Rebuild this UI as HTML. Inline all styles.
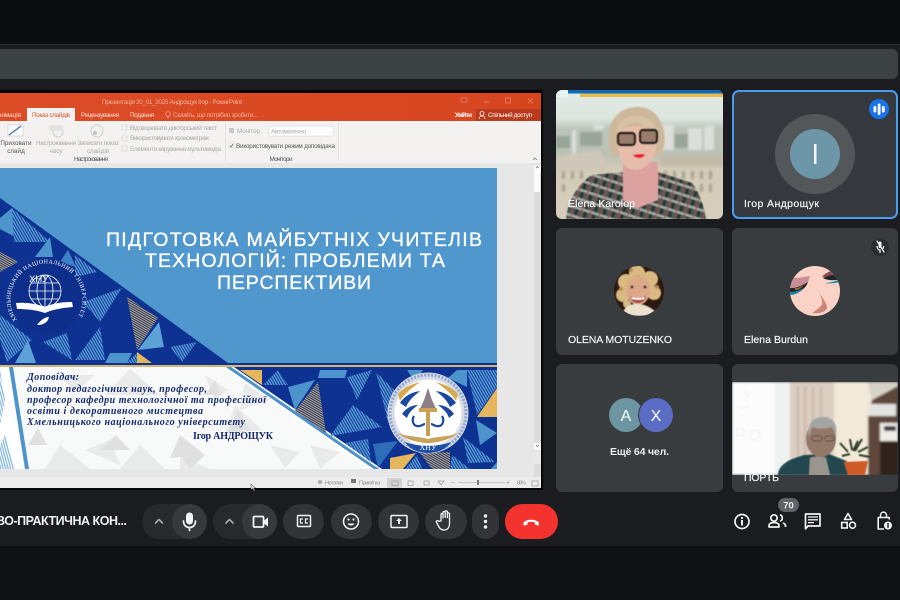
<!DOCTYPE html>
<html lang="uk"><head><meta charset="utf-8"><title>Meet</title>
<style>
html,body{margin:0;padding:0;background:#1a1c1f;width:900px;height:600px;overflow:hidden}
svg{display:block}
text{font-family:"Liberation Sans","DejaVu Sans",sans-serif}
.rb{font-size:6.3px;fill:#a9a9a9}
.rd{font-size:6.3px;fill:#555}
.n{font-size:10.5px;fill:#f1f3f4;font-weight:400;stroke:#f1f3f4;stroke-width:.2}
.ic{fill:none;stroke:#f1f3f4;stroke-width:1.7;stroke-linecap:round;stroke-linejoin:round}
.f{fill:#f1f3f4}
.dk{font-family:"Liberation Serif","DejaVu Serif",serif;font-weight:700;font-style:italic;font-size:10px;fill:#142a70}
</style></head><body>
<svg width="900" height="600" viewBox="0 0 900 600" xmlns="http://www.w3.org/2000/svg">
<defs>
<filter id="b3" x="-5%" y="-5%" width="110%" height="110%"><feGaussianBlur stdDeviation=".3"/></filter>
<filter id="b5" x="-5%" y="-5%" width="110%" height="110%"><feGaussianBlur stdDeviation=".5"/></filter>
<filter id="b1" x="-10%" y="-10%" width="120%" height="120%"><feGaussianBlur stdDeviation="1"/></filter>
<pattern id="hL" width="2.4" height="2.4" patternUnits="userSpaceOnUse" patternTransform="rotate(60)"><rect width="2.4" height="2.4" fill="#133f9c"/><rect width="2.4" height="1.3" fill="#5b9fd6"/></pattern>
<pattern id="hT" width="2" height="2" patternUnits="userSpaceOnUse" patternTransform="rotate(30)"><rect width="2" height="2" fill="#24387f"/><rect width="2" height="1" fill="#bda876"/></pattern>
<pattern id="hW" width="2.4" height="2.4" patternUnits="userSpaceOnUse" patternTransform="rotate(75)"><rect width="2.4" height="2.4" fill="#fff"/><rect width="2.4" height="1.2" fill="#7db3da"/></pattern>
<pattern id="pl" width="9" height="9" patternUnits="userSpaceOnUse" patternTransform="rotate(18)"><rect width="9" height="9" fill="#4d5a55"/><rect width="3" height="9" fill="#29332f"/><rect width="9" height="2.5" fill="#a2aaa3"/><rect x="6" width="1" height="9" fill="#9c4a4c"/></pattern>
<linearGradient id="ttl" x1="0" x2="1" y1="0" y2="0"><stop offset="0" stop-color="#dc4d27"/><stop offset="1" stop-color="#d6451f"/></linearGradient>
<linearGradient id="sky" x1="0" x2="0" y1="0" y2="1"><stop offset="0" stop-color="#e2ebe5"/><stop offset=".22" stop-color="#dde5df"/><stop offset=".3" stop-color="#bcc5bb"/><stop offset=".5" stop-color="#bcc1b6"/><stop offset=".62" stop-color="#d3ccb9"/><stop offset="1" stop-color="#d6cebb"/></linearGradient>
<clipPath id="t1"><rect x="556" y="90" width="167" height="129" rx="6"/></clipPath>
<clipPath id="t6"><rect x="732" y="382" width="166" height="93"/></clipPath>
<clipPath id="a3"><circle cx="639" cy="291" r="25"/></clipPath>
<clipPath id="a4"><circle cx="815" cy="291" r="25"/></clipPath>
<clipPath id="slide"><rect x="0" y="168" width="497" height="301"/></clipPath>
<path id="arc" d="M17 320A36 36 0 1 1 76 320"/>
</defs>

<!-- page background -->
<rect width="900" height="600" fill="#1a1c1f"/>
<rect width="900" height="44" fill="#0b0c10"/>
<rect y="44" width="900" height="1" fill="#2a2c2f"/>
<rect y="546" width="900" height="54" fill="#101114"/>
<rect x="-8" y="49" width="906" height="30" rx="6" fill="#3c4144"/>

<!-- shared screen -->
<rect x="-2" y="90" width="545" height="400" fill="#050505"/>
<g filter="url(#b3)">
<rect x="0" y="93" width="541" height="28" fill="url(#ttl)"/>
<rect x="0" y="121" width="541" height="43" fill="#f3f2f1"/>
<rect x="0" y="163" width="541" height="315" fill="#e7e7e7"/>
<rect x="0" y="477" width="541" height="11" fill="#ececec"/>
<rect x="534" y="164" width="7" height="313" fill="#dcdcdc"/>
<rect x="534" y="165" width="7" height="7" fill="#fafafa"/>
<rect x="534" y="172" width="6" height="20" fill="#fbfbfb"/>
<rect x="534" y="443" width="7" height="7" fill="#fafafa"/>
<rect x="534" y="450" width="7" height="7" fill="#e8e8e8"/><rect x="534" y="457" width="7" height="7" fill="#e8e8e8"/>
<path d="M536 168l1.400-1.600 1.400 1.600M536 445l1.400 1.600 1.400-1.600" fill="none" stroke="#666" stroke-width=".7"/>
<text x="172" y="104" text-anchor="middle" font-size="6.300" fill="#f1b19d" textLength="140">Презентація 20_01_2025 Андрощук Ігор - PowerPoint</text>
<path d="M461 98h6v4h-6zM484 102h5M505.500 98h5v5h-5zM528 98.500l5 5m0-5l-5 5" fill="none" stroke="#e98a6f" stroke-width=".7"/>
<rect x="27" y="108" width="48" height="13" fill="#f3f2f1"/>
<text x="0" y="117" font-size="6.300" fill="#fbe3da" textLength="21">німація</text>
<text x="32" y="117" font-size="6.300" fill="#d9532f" textLength="38">Показ слайдів</text>
<text x="81" y="117" font-size="6.300" fill="#fbe3da" textLength="38">Рецензування</text>
<text x="130" y="117" font-size="6.300" fill="#fbe3da" textLength="24">Подання</text>
<circle cx="168" cy="114" r="2.300" fill="none" stroke="#f4b8a5" stroke-width=".7"/><path d="M167 117.500h2" stroke="#f4b8a5" stroke-width=".8"/>
<text x="173" y="117" font-size="6.300" fill="#f2b49e" textLength="85">Скажіть, що потрібно зробити...</text>
<text x="455" y="117" font-size="6.300" fill="#fff" font-weight="700" textLength="17">Увійти</text>
<rect x="476" y="109" width="65" height="12" fill="#b93b1b"/>
<circle cx="482" cy="113.500" r="2" fill="none" stroke="#fff" stroke-width=".8"/><path d="M479 119c0-4 6-4 6 0" fill="none" stroke="#fff" stroke-width=".8"/>
<text x="488" y="117" font-size="6.300" fill="#fff" textLength="44">Спільний доступ</text>

<rect x="8" y="125" width="15" height="11" fill="#fff" stroke="#bbb" stroke-width=".5"/><path d="M9 135l12-9" stroke="#3c6fb0" stroke-width="1.200"/>
<circle cx="58" cy="132" r="5" fill="none" stroke="#cfcfcf"/><rect x="49" y="125" width="14" height="6" fill="#e4e4e4"/>
<circle cx="97" cy="131" r="6" fill="none" stroke="#cfcfcf"/><circle cx="95" cy="133" r="2" fill="#c4c4c4"/>
<text x="16" y="145" text-anchor="middle" class="rd">Приховати</text><text x="16" y="153" text-anchor="middle" class="rd">слайд</text>
<text x="56" y="145" text-anchor="middle" class="rb" textLength="40">Настроювання</text><text x="56" y="153" text-anchor="middle" class="rb">часу</text>
<text x="98" y="145" text-anchor="middle" class="rb" textLength="41">Записати показ</text><text x="98" y="153" text-anchor="middle" class="rb">слайдів</text>
<text x="91" y="161" text-anchor="middle" class="rd" textLength="34">Настроювання</text>
<g fill="none" stroke="#d5d5d5" stroke-width=".7"><rect x="122" y="125" width="5" height="5"/><rect x="122" y="136" width="5" height="5"/><rect x="122" y="146" width="5" height="5"/></g>
<text x="130" y="130" class="rb" textLength="87">Відтворювати дикторський текст</text>
<text x="130" y="140" class="rb" textLength="79">Використовувати хронометраж</text>
<text x="130" y="151" class="rb" textLength="91">Елементи керування мультимедіа</text>
<rect x="225" y="123" width=".8" height="38" fill="#dedede"/>
<rect x="229" y="128" width="5" height="5" fill="#c8c8c8"/>
<text x="237" y="133" class="rb" textLength="23">Монітор</text>
<rect x="269" y="126" width="64" height="10" fill="#fdfdfd" stroke="#d4d4d4" stroke-width=".5"/>
<text x="271" y="133.500" class="rb" textLength="35">Автоматично</text>
<rect x="229" y="143" width="5" height="5" fill="#fff" stroke="#bbb" stroke-width=".4"/><path d="M230 145.500l1 1.500 2-3" fill="none" stroke="#555" stroke-width=".7"/>
<text x="236" y="148" class="rd" textLength="99">Використовувати режим доповідача</text>
<text x="281" y="161" text-anchor="middle" class="rd" textLength="23">Монітори</text>
<rect x="338" y="123" width=".8" height="38" fill="#dedede"/>
<path d="M533 160l2-2 2 2" fill="none" stroke="#666" stroke-width=".7"/>

<!-- status -->
<rect x="387" y="478" width="15" height="10" fill="#d2d2d2"/>
<g fill="none" stroke="#999" stroke-width=".7"><rect x="392" y="481" width="6" height="4.500"/><rect x="408" y="481" width="5" height="4.500"/><rect x="424" y="481" width="5" height="4"/><path d="M438 481h6l-3 4z"/><rect x="532" y="481" width="6" height="5"/></g>
<circle cx="320" cy="482" r="2" fill="#aaa"/>
<rect x="351" y="479" width="5" height="4" fill="#777"/>
<text x="325" y="484.500" font-size="5.500" fill="#8b8b8b" textLength="18">Нотатки</text>
<text x="359" y="484.500" font-size="5.500" fill="#8b8b8b" textLength="21">Примітка</text>
<path d="M451 482.500h4M458 482.500h47M506 482.500h4M508 480.500v4" stroke="#999" stroke-width=".6"/>
<rect x="477" y="480" width="2" height="5" fill="#777"/>
<text x="517" y="484.500" font-size="5.500" fill="#8b8b8b" textLength="9">86%</text>
</g>

<!-- slide -->
<g clip-path="url(#slide)"><g filter="url(#b3)">
<rect x="0" y="168" width="497" height="197" fill="#4f97cc"/>
<polygon points="0,198 228,363 0,363" fill="#0a3391"/>
<!-- upper-left triangles -->
<polygon points="0,218 12,208 17,238 0,229" fill="#4d93cc"/>
<polygon points="12,208 50,242 14,242" fill="url(#hL)"/>
<polygon points="50,237 53,257 35,257" fill="#4d93cc"/>
<polygon points="0,252 18,262 0,272" fill="url(#hT)"/>
<polygon points="68,250 76,267 60,262" fill="#3d80c4"/>
<polygon points="75,255 97,272 75,277" fill="url(#hL)"/>
<polygon points="83,302 122,288 100,322" fill="url(#hL)"/>
<polygon points="127,297 158,318 137,350" fill="url(#hT)"/>
<polygon points="159,322 164,347 138,350" fill="#5da2d6"/>
<polygon points="170,347 197,342 182,362" fill="url(#hL)"/>
<polygon points="137,352 152,363 137,363" fill="#e6b65c"/>
<polygon points="137,353 137,363 126,363" fill="url(#hL)"/>
<polygon points="110,353 132,353 127,363 105,363" fill="#4d93cc"/>
<polygon points="100,327 105,360 75,360" fill="url(#hL)"/>
<polygon points="67,333 72,360 43,342" fill="url(#hL)"/>
<polygon points="0,315 32,340 7,362 0,340" fill="url(#hL)"/>
<polygon points="28,340 36,363 15,363" fill="#5da2d6"/>
<!-- left emblem -->
<circle cx="46" cy="296" r="38" fill="#0a2f8a"/>
<text font-size="5.800" fill="#fff" style="font-family:'Liberation Serif',serif" textLength="152"><textPath href="#arc" startOffset="0">ХМЕЛЬНИЦЬКИЙ НАЦІОНАЛЬНИЙ УНІВЕРСИТЕТ</textPath></text>
<g fill="none" stroke="#fff" stroke-width=".8"><circle cx="45" cy="291" r="16"/><ellipse cx="45" cy="291" rx="8" ry="16"/><path d="M45 275v32M29 291h32M31 283h28M31 299h28"/></g>
<text x="29" y="282" font-size="9.500" fill="#fff">ХНУ</text>
<path d="M16 303c12-1 20 1 29 4 9-4 17-5 27-5l1 5c-10 1-19 2-28 6-9-3-18-4-28-4z" fill="#fff"/>
<path d="M37 325c3-4 7-8 12-8-1 5-5 8-12 8z" fill="#fff"/>
<!-- bars -->
<rect x="0" y="363" width="497" height="2" fill="#0a3391"/>
<rect x="0" y="365" width="497" height="2.200" fill="#d9b673"/>
<!-- lower band -->
<rect x="0" y="367" width="497" height="102" fill="#0a3391"/>
<polygon points="0,367 225,367 372,469 0,469" fill="#f8f9f9"/>
<g fill="#e9eaea">
<polygon points="130,369 160,395 105,395"/><polygon points="205,375 228,390 215,400"/><polygon points="235,405 262,430 225,434"/><polygon points="60,375 95,375 75,392"/><polygon points="245,380 270,400 240,410"/><polygon points="85,450 110,440 120,465"/>
<polygon points="60,445 90,469 45,469"/><polygon points="140,445 165,469 120,469"/><polygon points="180,456 210,469 180,469"/><polygon points="270,445 300,452 285,468"/><polygon points="310,445 340,452 320,469"/>
</g>
<g fill="#dfe0df">
<polygon points="180,435 205,455 170,458"/><polygon points="38,428 47,445 28,445"/><polygon points="116,435 130,450 100,450"/><polygon points="238,410 250,430 228,432"/><polygon points="215,380 222,395 205,395"/><polygon points="180,455 205,455 190,469"/>
</g>
<polygon points="0,367 9,367 25,469 0,469" fill="#fff"/>
<polygon points="0,370 5,400 0,425" fill="url(#hW)"/>
<polygon points="5,435 15,469 0,469 0,445" fill="url(#hW)"/>
<polygon points="9,367 13,367 29,469 25,469" fill="#4d94c9"/>
<polygon points="222,367 226,367 374,469 369,469" fill="#fff"/>
<polygon points="226,367 231,367 379,469 374,469" fill="#4d94c9"/>
<polygon points="231,367 234,367 382,469 379,469" fill="#fff"/>
<!-- right triangles -->
<polygon points="240,370 262,370 262,385" fill="#e6b65c"/>
<polygon points="263,385 278,370 288,385" fill="url(#hL)"/>
<polygon points="288,387 315,380 295,410" fill="#4d93cc"/>
<polygon points="318,382 326,433 295,411" fill="url(#hT)"/>
<polygon points="320,370 347,370 345,378 318,378" fill="#4d93cc"/>
<polygon points="347,377 372,370 357,400" fill="url(#hL)"/>
<polygon points="353,405 382,427 330,436" fill="url(#hL)"/>
<polygon points="376,372 397,393 388,423" fill="url(#hL)"/>
<polygon points="407,370 423,370 415,382" fill="#4d93cc"/>
<polygon points="448,378 457,370 467,370 467,387" fill="#4d93cc"/>
<polygon points="467,370 497,370 497,387 477,415" fill="url(#hL)"/>
<polygon points="497,388 497,417 477,417" fill="#e6b65c"/>
<polygon points="476,420 497,433 480,445" fill="#4d93cc"/>
<polygon points="463,437 495,462 468,463" fill="url(#hL)"/>
<polygon points="345,443 368,439 371,462" fill="url(#hL)"/>
<polygon points="373,444 398,441 378,468" fill="#2f6db8"/>
<polygon points="390,458 416,453 403,469 390,469" fill="#e6b65c"/>
<polygon points="420,453 450,452 450,469 432,469" fill="url(#hT)"/>
<polygon points="417,455 422,469 405,469" fill="url(#hL)"/>
<polygon points="452,455 470,469 450,469" fill="url(#hL)"/>
<polygon points="497,462 497,469 491,469" fill="#4d93cc"/>
<!-- seal -->
<circle cx="428" cy="413" r="40.500" fill="#d6dbe6"/>
<circle cx="428" cy="413" r="38" fill="none" stroke="#8ea4cc" stroke-width="3" stroke-dasharray="2 1.500"/>
<circle cx="428" cy="413" r="33.500" fill="#fff"/>
<path d="M398 394c5-6 14-10 22-12-8 6-15 11-20 19zM458 394c-5-6-14-10-22-12 8 6 15 11 20 19z" fill="#d9a94e"/>
<path d="M400 403c5-8 13-11 20-12-6 5-11 9-14 16zM456 403c-5-8-13-11-20-12 6 5 11 9 14 16zM402 414c4-6 10-9 16-9-5 4-9 7-11 13zM454 414c-4-6-10-9-16-9 5 4 9 7 11 13z" fill="#1d4aa0"/>
<path d="M428 388l4 12 5 11h-18l5-11z" fill="#8b7f87"/>
<rect x="419" y="408" width="18" height="4" fill="#cda253"/>
<rect x="426" y="412" width="4" height="24" fill="#c69e55"/>
<path d="M414 416c-3 5 0 10 3 10 4 1 6-2 8-2M442 416c3 5 0 10-3 10-4 1-6-2-8-2" fill="none" stroke="#1d4aa0" stroke-width="2.200"/>
<path d="M398 433c9 4 20 3 30 6 10-3 21-2 30-6-6 6-20 10-30 10s-24-4-30-10z" fill="#c9a25b"/>
<path d="M405 442c12 5 34 5 46 0-5 8-15 11-23 11s-18-3-23-11z" fill="#1a4ea8"/>
<text x="428" y="450" text-anchor="middle" font-size="8" fill="#fff" style="font-family:'Liberation Serif',serif">ХНУ</text>
<!-- text -->
<text x="27" y="380" class="dk" textLength="52">Доповідач:</text>
<text x="27" y="392" class="dk" textLength="180">доктор педагогічних наук, професор,</text>
<text x="27" y="403" class="dk" textLength="239">професор кафедри технологічної та професійної</text>
<text x="27" y="414" class="dk" textLength="176">освіти і декоративного мистецтва</text>
<text x="27" y="425" class="dk" textLength="218">Хмельницького національного університету</text>
<text x="193" y="439" font-size="10" font-weight="700" fill="#142a70" style="font-family:'Liberation Serif',serif" textLength="80">Ігор АНДРОЩУК</text>
<!-- heading -->
<g font-size="19.500" fill="#fff" stroke="#fff" stroke-width=".35">
<text x="106" y="246" textLength="376">ПІДГОТОВКА МАЙБУТНІХ УЧИТЕЛІВ</text>
<text x="145" y="267" textLength="300">ТЕХНОЛОГІЙ: ПРОБЛЕМИ ТА</text>
<text x="217" y="289" textLength="154">ПЕРСПЕКТИВИ</text>
</g>
</g></g>
<path d="M251 484v6l1.500-1.500 1.500 2.500 1-.6-1.400-2.400 2 0z" fill="#ddd" stroke="#222" stroke-width=".4"/>

<!-- tile 1 -->
<g clip-path="url(#t1)">
<rect x="556" y="90" width="167" height="129" fill="url(#sky)"/>
<g filter="url(#b1)">
<g fill="#dcdeda"><rect x="660" y="124" width="14" height="26"/><rect x="688" y="128" width="14" height="22"/><rect x="704" y="126" width="10" height="24"/><rect x="594" y="124" width="10" height="6"/><rect x="572" y="130" width="4" height="26"/></g>
<g fill="#9aa59a"><rect x="580" y="132" width="22" height="14"/><rect x="674" y="134" width="14" height="14"/><rect x="556" y="136" width="14" height="12"/></g>
<polygon points="556,156 600,150 612,172 556,172" fill="#cfc7b7"/>
<rect x="660" y="156" width="63" height="10" fill="#c4baa8"/>
<g fill="#a9a191"><rect x="562" y="171" width="3" height="8"/><rect x="571" y="171" width="3" height="8"/><rect x="580" y="171" width="3" height="8"/><rect x="664" y="171" width="3" height="8"/><rect x="673" y="171" width="3" height="8"/><rect x="682" y="171" width="3" height="8"/><rect x="691" y="171" width="3" height="8"/><rect x="700" y="171" width="3" height="8"/><rect x="709" y="171" width="3" height="8"/><rect x="562" y="184" width="3" height="8"/><rect x="700" y="184" width="3" height="8"/><rect x="709" y="184" width="3" height="8"/></g>
</g>
<rect x="556" y="90" width="167" height="3.500" fill="#1268b8"/>
<rect x="580" y="93.500" width="143" height="3.500" fill="#e5bd4c"/>
<rect x="556" y="90" width="12" height="7" fill="#e9f2f2"/>
<g filter="url(#b5)">
<path d="M566 219c2-15 8-32 26-44l32-3h34l34 11c8 10 12 24 14 36z" fill="url(#pl)"/>
<path d="M623 162h35v38l-20 8-15-8z" fill="#dba2a0"/>
<path d="M610 150c-3-16-1-31 12-39 14-8 31-4 37 8 7 11 7 23 3 33-3 7-7 4-8 2l-35 1c-3 4-7 1-9-5z" fill="#cdb89c"/>
<path d="M618 134c2-6 9-8 19-8 10 0 17 4 19 10 1 10 0 18-4 24-5 7-11 10-16 10-7 0-12-4-15-10-3-7-4-18-3-26z" fill="#e5bdaa"/>
<path d="M617 134c5-6 12-12 21-12 6 6 14 9 19 15 0-10-6-21-21-21s-20 10-19 18z" fill="#d6c2a4"/>
<g fill="#3d2c24" fill-opacity=".45" stroke="#231a16" stroke-width="2.400"><rect x="618" y="133" width="17" height="12" rx="3"/><rect x="640" y="130" width="17" height="13" rx="3"/></g>
<path d="M633 155c4-1 8-1 12-1-1 3-3 4-6 4-3 0-5-1-6-3z" fill="#ec1c2a"/>
</g>
</g>
<text x="568" y="207" class="n" textLength="67">Elena Karolop</text>

<!-- tile 2 -->
<rect x="733" y="91" width="164" height="127" rx="6" fill="#35383c" stroke="#4a9cf0" stroke-width="2"/>
<circle cx="815" cy="154" r="40" fill="#54575a"/>
<circle cx="815" cy="154" r="25" fill="#6d97a8"/>
<rect x="814" y="144" width="2.500" height="20" fill="#f4f6f7"/>
<circle cx="879" cy="109" r="10" fill="#1a73e8"/>
<g fill="#fff"><rect x="873.500" y="106" width="2.800" height="6.500" rx="1.400"/><rect x="877.700" y="103.500" width="2.800" height="11.500" rx="1.400"/><rect x="881.900" y="106" width="2.800" height="6.500" rx="1.400"/></g>
<text x="744" y="207" class="n" textLength="75">Ігор Андрощук</text>

<!-- tile 3 -->
<rect x="556" y="228" width="167" height="127" rx="6" fill="#383c3f"/>
<g clip-path="url(#a3)"><rect x="614" y="266" width="50" height="50" fill="#2c1a12"/>
<g filter="url(#b5)">
<g fill="#d9ba82"><circle cx="626" cy="282" r="8"/><circle cx="623" cy="295" r="7"/><circle cx="637" cy="273" r="8"/><circle cx="650" cy="279" r="8"/><circle cx="654" cy="293" r="7"/><circle cx="627" cy="304" r="4"/></g>
<g fill="#b98e56"><circle cx="621" cy="289" r="2"/><circle cx="657" cy="287" r="2"/><circle cx="631" cy="270" r="2"/></g>
<ellipse cx="638" cy="290" rx="12" ry="15" fill="#dba98a"/>
<path d="M627 283c4-7 18-8 23-1-5-3-9-4-12-4-3 1-7 2-11 5z" fill="#d7b577"/>
<path d="M630 296c4 6 12 6 16 0-3 3-13 3-16 0z" fill="#fff"/><path d="M630 296c4 2 12 2 16 0-1 5-4 7-8 7s-7-2-8-7z" fill="#a9443e"/><path d="M631 297c4 1 10 1 14 0l-1 2c-3 1-9 1-12 0z" fill="#fff"/>
<circle cx="632" cy="287" r="1.500" fill="#3b2015"/><circle cx="645" cy="287" r="1.500" fill="#3b2015"/>
<path d="M622 316c1-9 8-12 14-12s11 1 19 7l-6 5z" fill="#ece0cf"/>
</g></g>
<text x="568" y="343" class="n" textLength="104">OLENA MOTUZENKO</text>

<!-- tile 4 -->
<rect x="732" y="228" width="166" height="127" rx="6" fill="#383c3f"/>
<g clip-path="url(#a4)"><rect x="790" y="266" width="50" height="50" fill="#fad3c6"/>
<g filter="url(#b3)">
<path d="M790 277c7 2 14 0 20-1l-3 9c-6 1-12 2-17 3z" fill="#c98d96"/>
<path d="M790 288c6 0 12-2 18-6-1 2-2 5-5 7-4 3-9 5-13 5z" fill="#2a2326"/>
<path d="M790 292c5 0 10-2 14-4-3 4-9 7-14 7z" fill="#1684a5"/>
<path d="M795 288c3 0 6-1 8-3-1 3-4 5-8 5z" fill="#9c6a3a"/>
<path d="M822 277c4-5 10-7 17-7l1 5c-6 0-12 3-18 2z" fill="#8a4a50"/>
<path d="M823 278c5-2 10-4 16-3l1 5c-6 0-12 1-17-2z" fill="#20262a"/>
<path d="M825 283c5 0 10-2 15-3v2c-5 1-10 2-15 1z" fill="#118aa8"/>
<path d="M812 313c7 1 15-1 15-6-1-5-5-10-7-13 1 5 4 8 1 12-3 3-6 5-9 7z" fill="#c98578"/>
</g></g>
<circle cx="880" cy="247" r="9" fill="#2b2e31"/>
<g fill="none" stroke="#f1f3f4" stroke-width="1.300" stroke-linecap="round"><path d="M877 241l7 11"/><path d="M877 246.500c0 2 1.500 3.500 3 3.500M883.500 246.500c0 .8-.2 1.400-.5 2"/><path d="M880 250v2.500"/></g>
<rect x="878.500" y="241.500" width="3" height="6.500" rx="1.500" fill="#f1f3f4"/>
<text x="744" y="343" class="n" textLength="64">Elena Burdun</text>

<!-- tile 5 -->
<rect x="556" y="364" width="167" height="128" rx="6" fill="#383c3f"/>
<circle cx="626" cy="415" r="17" fill="#6d96a3"/>
<circle cx="656" cy="415" r="18" fill="#383c3f"/>
<circle cx="656" cy="415" r="17" fill="#5a6cc4"/>
<text x="626" y="421" text-anchor="middle" font-size="16" fill="#fff">A</text>
<text x="656" y="421" text-anchor="middle" font-size="16" fill="#fff">X</text>
<text x="610" y="455" font-size="10.500" font-weight="700" fill="#eceff0" textLength="59">Ещё 64 чел.</text>

<!-- tile 6 -->
<rect x="732" y="364" width="166" height="128" rx="6" fill="#383c3f"/>
<text x="744" y="481" class="n" textLength="35">ПОРТЬ</text>
<g clip-path="url(#t6)"><g filter="url(#b1)">
<rect x="732" y="382" width="60" height="93" fill="#fcfcfc"/>
<rect x="775" y="382" width="20" height="93" fill="#eef3f2"/>
<rect x="790" y="382" width="44" height="93" fill="#dccdc1"/>
<g fill="#c8b6a8"><rect x="797" y="386" width="2" height="85"/><rect x="804" y="386" width="2" height="85"/><rect x="812" y="386" width="2" height="85"/><rect x="820" y="386" width="2" height="85"/></g>
<rect x="834" y="382" width="40" height="93" fill="#f2e9d8"/>
<rect x="868" y="382" width="30" height="93" fill="#5e463b"/>
<polygon points="868,382 898,382 898,386 872,400" fill="#d8d3c8"/>
<polygon points="868,382 872,400 868,415" fill="#f2e9d8"/>
<rect x="868" y="404" width="28" height="12" fill="#e2e2df"/>
<rect x="880" y="423" width="18" height="18" fill="#f0ece7"/><rect x="884" y="426" width="12" height="5" fill="#3c3344"/>
<rect x="880" y="441" width="18" height="34" fill="#30201b"/>
</g>
<g filter="url(#b5)">
<g fill="none" stroke="#e9edee" stroke-width=".7"><circle cx="755" cy="435" r="5"/><circle cx="740" cy="432" r="4"/><path d="M735 405c6 4 8 4 14 1M745 390l3 8"/></g>
<path d="M778 475c0-8 8-14 17-17l9-3 25-1 10 4c9 3 17 8 18 17z" fill="#244650"/>
<path d="M809 475l1-17c4-2 14-2 16 0l4 17z" fill="#9b968d"/>
<ellipse cx="821" cy="439" rx="15" ry="18" fill="#93786a"/>
<path d="M809 437c-2-12 3-20 14-20 10 0 15 7 13 20-2-6-3-8-4-10-7 2-17 2-20 0z" fill="#a3a6a4"/>
<g fill="none" stroke="#544c49" stroke-width=".9"><rect x="812" y="436" width="10" height="5" rx="2"/><rect x="825" y="436" width="9" height="5" rx="2"/></g>
<path d="M848 452l-8-9M852 450l-2-11M855 451l7-12M858 452l10-5M850 454l-8 2M859 455l11 2M853 451l5-10" stroke="#2d3c26" stroke-width="2" fill="none"/>
<polygon points="844,462 868,461 865,475 848,475" fill="#d05a28"/>
</g></g>

<!-- bottom bar -->
<text x="-4" y="525" font-size="12.500" font-weight="700" fill="#eef0f1" textLength="131">ВО-ПРАКТИЧНА КОН...</text>

<rect x="142" y="504" width="65" height="35" rx="17.500" fill="#27292c"/>
<circle cx="189.500" cy="521.500" r="17.500" fill="#37393c"/>
<path d="M155.500 523l3.500-3.500 3.500 3.500" class="ic" style="stroke:#a4a6a8"/>
<rect x="186" y="512.500" width="7" height="12" rx="3.500" class="f"/>
<path d="M183.500 521c0 4 2.500 6.500 6 6.500s6-2.500 6-6.500M189.500 527.500v3" class="ic"/>

<rect x="213" y="504" width="64" height="35" rx="17.500" fill="#27292c"/>
<circle cx="259.500" cy="521.500" r="17.500" fill="#37393c"/>
<path d="M226 523l3.500-3.500 3.500 3.500" class="ic" style="stroke:#a4a6a8"/>
<rect x="253.500" y="516.500" width="10" height="10.500" rx="1" fill="none" stroke="#f1f3f4" stroke-width="1.800"/>
<path d="M264 520.500l4-3v9l-4-3z" class="f"/>

<g fill="#323437">
<rect x="283" y="504" width="41" height="35" rx="17.500"/>
<rect x="331" y="504" width="41" height="35" rx="17.500"/>
<rect x="378" y="504" width="41" height="35" rx="17.500"/>
<rect x="425" y="504" width="42" height="35" rx="17.500"/>
<rect x="472" y="504" width="27" height="35" rx="13.500"/>
</g>
<rect x="297.500" y="515.500" width="13" height="11" rx="1" fill="none" stroke="#f1f3f4" stroke-width="1.500"/>
<path d="M303 519h-2.500v4h2.500M308 519h-2.500v4h2.500" fill="none" stroke="#f1f3f4" stroke-width="1.200"/>
<circle cx="351" cy="521.500" r="7.500" fill="none" stroke="#f1f3f4" stroke-width="1.500"/>
<circle cx="348.500" cy="519.500" r="1.100" class="f"/><circle cx="353.500" cy="519.500" r="1.100" class="f"/>
<path d="M347.500 523.500c1 2.600 6 2.600 7 0z" class="f"/>
<rect x="391" y="515.500" width="16" height="12" rx="1" fill="none" stroke="#f1f3f4" stroke-width="1.500"/>
<path d="M399 518l3 3h-2v3h-2v-3h-2z" class="f"/>
<path d="M441 521v-6.500c0-1.500 2-1.500 2 0v3.500-5.500c0-1.500 2.200-1.500 2.200 0v5-5.500c0-1.500 2.200-1.500 2.200 0v5.500-3.500c0-1.500 2.100-1.500 2.100 0v9.500c0 4-2 6.500-5.500 6.500-2.500 0-3.800-1-5-3l-2.500-4.500c-.8-1.500 1-2.500 2-1.300z" fill="none" stroke="#f1f3f4" stroke-width="1.300" stroke-linejoin="round"/>
<circle cx="485.500" cy="516" r="1.700" class="f"/><circle cx="485.500" cy="521.500" r="1.700" class="f"/><circle cx="485.500" cy="527" r="1.700" class="f"/>
<rect x="505" y="504" width="53" height="35" rx="17.500" fill="#f5332e"/>
<path d="M523.500 523.500c0-5 15-5 15.500 0l-.2 1.500c-.2.500-.7.500-1.100.4l-2.300-.7c-.4-.2-.5-.5-.5-.9v-1.300c-2.500-1-5-1-7.300 0v1.300c0 .4-.2.700-.5.900l-2.400.7c-.4.100-.9.100-1.100-.4z" fill="#fff"/>

<!-- right icons -->
<circle cx="742" cy="521.500" r="7" fill="none" stroke="#f1f3f4" stroke-width="1.700"/>
<circle cx="742" cy="518" r="1.100" class="f"/><rect x="741" y="520" width="2" height="5.500" class="f"/>
<rect x="778" y="498" width="21" height="14" rx="7" fill="#5f6368"/>
<text x="788.500" y="508.500" text-anchor="middle" font-size="9.500" font-weight="700" fill="#eceff0">70</text>
<circle cx="774" cy="518" r="3.200" fill="none" stroke="#f1f3f4" stroke-width="1.700"/>
<path d="M769 527v-1.500c0-2 2.500-3 5-3s5 1 5 3v1.500z" fill="none" stroke="#f1f3f4" stroke-width="1.700" stroke-linejoin="round"/>
<path d="M780 514.800a3.300 3.300 0 0 1 0 6.300M783 523c1.500.5 2.500 1.500 2.500 3v1" fill="none" stroke="#f1f3f4" stroke-width="1.700"/>
<path d="M805.500 514h14.500v12h-12l-2.500 2.800z" fill="none" stroke="#f1f3f4" stroke-width="1.700" stroke-linejoin="round"/>
<path d="M808 517h10M808 519.800h10M808 522.600h6" stroke="#f1f3f4" stroke-width="1.300"/>
<path d="M848 513.500l3.500 6h-7z" fill="none" stroke="#f1f3f4" stroke-width="1.600" stroke-linejoin="round"/>
<rect x="841.700" y="522.500" width="5.500" height="5.500" fill="none" stroke="#f1f3f4" stroke-width="1.600"/>
<circle cx="852.500" cy="525.200" r="3" fill="none" stroke="#f1f3f4" stroke-width="1.600"/>
<path d="M880.500 517.500v-2c0-4.500 6-4.500 6 0v2" fill="none" stroke="#f1f3f4" stroke-width="1.500"/>
<path d="M884 529h-5.800v-11.500h11v2" fill="none" stroke="#f1f3f4" stroke-width="1.600" stroke-linejoin="round"/>
<circle cx="888" cy="525.500" r="4" class="f"/><rect x="887.300" y="523" width="1.400" height="4.800" fill="#17191c"/>
</svg>
</body></html>
